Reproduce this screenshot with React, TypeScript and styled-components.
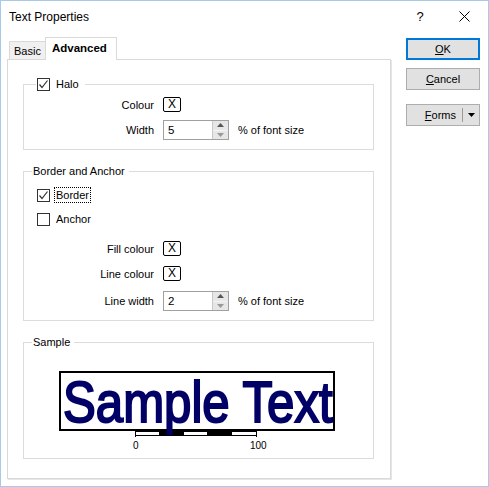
import React from 'react';
import styled, { createGlobalStyle } from 'styled-components';

const GlobalStyle = createGlobalStyle`
  html, body {
    margin: 0;
    padding: 0;
    background: #ffffff;
  }
  * {
    box-sizing: border-box;
  }
`;

type BoxProps = {
  $checked?: boolean;
};

type GroupProps = {
  $padTop?: number;
  $padBottom?: number;
};

type LegendProps = {
  $left?: number;
  $right?: number;
};

const Check: React.FC<BoxProps> = ({ $checked }) => (
  <CheckBox>
    {$checked && (
      <svg width="11" height="11" viewBox="0 0 11 11">
        <polyline points="1.5,5.5 4,8.5 9.5,1.5" fill="none" stroke="#333" strokeWidth="1.2" />
      </svg>
    )}
  </CheckBox>
);

const SpinBox: React.FC<{ value: string }> = ({ value }) => (
  <Spin>
    <SpinEdit>{value}</SpinEdit>
    <SpinButtons>
      <SpinButton>
        <svg width="7" height="4" viewBox="0 0 7 4">
          <polygon points="0,4 7,4 3.5,0" fill="#555" />
        </svg>
      </SpinButton>
      <SpinButton>
        <svg width="7" height="4" viewBox="0 0 7 4">
          <polygon points="0,0 7,0 3.5,4" fill="#999" />
        </svg>
      </SpinButton>
    </SpinButtons>
  </Spin>
);

// scale bar drawn under the sample box
const ScaleBar: React.FC = () => (
  <svg width="160" height="22" viewBox="0 0 160 22">
    <line x1="18" y1="0.5" x2="140" y2="0.5" stroke="#000" strokeWidth="1" />
    <line x1="18" y1="4.5" x2="140" y2="4.5" stroke="#000" strokeWidth="1" />
    <rect x="42" y="0" width="25" height="4" fill="#000" />
    <rect x="90" y="0" width="25" height="4" fill="#000" />
    <line x1="18.5" y1="0" x2="18.5" y2="6" stroke="#000" strokeWidth="1" />
    <line x1="139.5" y1="0" x2="139.5" y2="6" stroke="#000" strokeWidth="1" />
    <text x="16" y="18" fontSize="10" fontFamily="Liberation Sans, Arial, sans-serif" fill="#000">0</text>
    <text x="133" y="18" fontSize="10" fontFamily="Liberation Sans, Arial, sans-serif" fill="#000">100</text>
  </svg>
);

const App: React.FC = () => (
  <>
    <GlobalStyle />
    <Window>
      <TitleBar>
        <TitleText>Text Properties</TitleText>
        <TitleButton>?</TitleButton>
        <TitleButton>
          <svg width="11" height="11" viewBox="0 0 11 11">
            <line x1="0.5" y1="0.5" x2="10.5" y2="10.5" stroke="#000" strokeWidth="1" />
            <line x1="10.5" y1="0.5" x2="0.5" y2="10.5" stroke="#000" strokeWidth="1" />
          </svg>
        </TitleButton>
      </TitleBar>
      <Body>
        <LeftColumn>
          <TabStrip>
            <Tab>Basic</Tab>
            <ActiveTab>Advanced</ActiveTab>
          </TabStrip>
          <Panel>
            <Group $padTop={6} $padBottom={9}>
              <Legend $left={12} $right={6}>
                <Check $checked />
                <LegendLabel>Halo</LegendLabel>
              </Legend>
              <FieldGrid>
                <FieldLabel>Colour</FieldLabel>
                <ColourBox>X</ColourBox>
                <span />
                <FieldLabel>Width</FieldLabel>
                <SpinBox value="5" />
                <Unit>% of font size</Unit>
              </FieldGrid>
            </Group>

            <Group $padTop={9} $padBottom={9}>
              <Legend $left={8} $right={4}>
                <LegendLabel>Border and Anchor</LegendLabel>
              </Legend>
              <CheckList>
                <CheckRow>
                  <Check $checked />
                  <Focused>Border</Focused>
                </CheckRow>
                <CheckRow>
                  <Check />
                  <CheckText>Anchor</CheckText>
                </CheckRow>
              </CheckList>
              <FieldGrid $gap={10}>
                <FieldLabel>Fill colour</FieldLabel>
                <ColourBox>X</ColourBox>
                <span />
                <FieldLabel>Line colour</FieldLabel>
                <ColourBox>X</ColourBox>
                <span />
                <FieldLabel>Line width</FieldLabel>
                <SpinBox value="2" />
                <Unit>% of font size</Unit>
              </FieldGrid>
            </Group>

            <Group $padTop={22} $padBottom={5}>
              <Legend $left={8} $right={4}>
                <LegendLabel>Sample</LegendLabel>
              </Legend>
              <SampleArea>
                <SampleBox>
                  <SampleText>Sample Text</SampleText>
                </SampleBox>
                <ScaleBar />
              </SampleArea>
            </Group>
          </Panel>
        </LeftColumn>

        <RightColumn>
          <DefaultButton>
            <u>O</u>K
          </DefaultButton>
          <Button>
            <u>C</u>ancel
          </Button>
          <SplitButton>
            <SplitMain>
              <u>F</u>orms
            </SplitMain>
            <SplitArrow>
              <svg width="7" height="4" viewBox="0 0 7 4">
                <polygon points="0,0 7,0 3.5,4" fill="#000" />
              </svg>
            </SplitArrow>
          </SplitButton>
        </RightColumn>
      </Body>
    </Window>
  </>
);

export default App;

const Window = styled.div`
  width: 489px;
  height: 487px;
  border: 1px solid #a9c9ea;
  background: #ffffff;
  display: flex;
  flex-direction: column;
  font-family: 'Liberation Sans', Arial, sans-serif;
  font-size: 11px;
  color: #000;
  overflow: hidden;
`;

const TitleBar = styled.div`
  height: 31px;
  display: flex;
  align-items: center;
  padding: 0 9px 0 8px;
`;

const TitleText = styled.div`
  flex: 1;
  font-size: 12px;
  color: #000;
`;

const TitleButton = styled.div`
  width: 30px;
  height: 31px;
  display: flex;
  align-items: center;
  justify-content: center;
  font-size: 13px;
  margin-left: 14px;
`;

const Body = styled.div`
  display: flex;
  padding: 5px 0 0 6px;
`;

const LeftColumn = styled.div`
  width: 384px;
  display: flex;
  flex-direction: column;
`;

const TabStrip = styled.div`
  height: 22px;
  display: flex;
  align-items: flex-end;
  padding-left: 2px;
`;

const Tab = styled.div`
  height: 18px;
  padding: 2px 4px 0 4px;
  border: 1px solid #d9d9d9;
  border-bottom: none;
  background: #f0f0f0;
  line-height: 15px;
`;

const ActiveTab = styled.div`
  position: relative;
  z-index: 1;
  height: 23px;
  margin-bottom: -1px;
  margin-left: -1px;
  padding: 3px 9px 0 6px;
  border: 1px solid #d9d9d9;
  border-bottom: none;
  background: #ffffff;
  font-weight: bold;
  font-size: 11.5px;
  line-height: 14px;
`;

const Panel = styled.div`
  width: 384px;
  height: 420px;
  border: 1px solid #d9d9d9;
  box-shadow: 1px 1px 0 #e6e6e6;
  background: #ffffff;
  padding: 17px 16px 0 15px;
  display: flex;
  flex-direction: column;
  gap: 14px;
`;

const Group = styled.fieldset<GroupProps>`
  margin: 0;
  min-width: 0;
  border: 1px solid #dcdcdc;
  padding: ${(props) => props.$padTop ?? 6}px 0 ${(props) => props.$padBottom ?? 9}px 0;
`;

const Legend = styled.legend<LegendProps>`
  display: flex;
  align-items: center;
  gap: 6px;
  height: 14px;
  margin-left: ${(props) => props.$left ?? 8}px;
  padding: 0 ${(props) => props.$right ?? 4}px 0 1px;
`;

const LegendLabel = styled.span`
  line-height: 14px;
`;

const CheckBox = styled.span`
  width: 13px;
  height: 13px;
  border: 1px solid #333;
  background: #fff;
  display: inline-flex;
  align-items: center;
  justify-content: center;
  flex-shrink: 0;
`;

const FieldGrid = styled.div<{ $gap?: number }>`
  display: grid;
  grid-template-columns: 130px auto 1fr;
  column-gap: 9px;
  row-gap: ${(props) => props.$gap ?? 8}px;
  align-items: center;
`;

const FieldLabel = styled.span`
  text-align: right;
`;

const ColourBox = styled.span`
  width: 18px;
  height: 15px;
  border: 1px solid #000;
  border-radius: 2px;
  display: flex;
  align-items: center;
  justify-content: center;
  font-size: 12px;
  line-height: 13px;
`;

const Unit = styled.span`
  white-space: nowrap;
`;

const Spin = styled.div`
  width: 66px;
  height: 20px;
  display: flex;
  border: 1px solid #a0a0a0;
  background: #fff;
`;

const SpinEdit = styled.div`
  flex: 1;
  padding-left: 4px;
  line-height: 18px;
  font-size: 11.5px;
`;

const SpinButtons = styled.div`
  width: 16px;
  display: flex;
  flex-direction: column;
  border-left: 1px solid #c8c8c8;
`;

const SpinButton = styled.div`
  flex: 1;
  background: #e6e6e6;
  display: flex;
  align-items: center;
  justify-content: center;
  &:first-child {
    border-bottom: 1px solid #f4f4f4;
  }
`;

const CheckList = styled.div`
  display: flex;
  flex-direction: column;
  gap: 8px;
  padding-left: 13px;
  margin-bottom: 14px;
`;

const CheckRow = styled.div`
  height: 16px;
  display: flex;
  align-items: center;
  gap: 5px;
`;

const CheckText = styled.span`
  padding-left: 1px;
`;

const Focused = styled.span`
  outline: 1px dotted #000;
  padding: 0 1px;
  line-height: 14px;
`;

const SampleArea = styled.div`
  display: flex;
  flex-direction: column;
  align-items: center;
  padding-right: 4px;
`;

const SampleBox = styled.div`
  width: 276px;
  height: 60px;
  border: 2px solid #000;
  display: flex;
  align-items: center;
  padding-left: 2px;
`;

const SampleText = styled.span`
  font-family: 'Liberation Sans', Arial, sans-serif;
  font-size: 47.5px;
  line-height: 48px;
  color: #000066;
  -webkit-text-stroke: 1.7px #000066;
  white-space: nowrap;
  transform: scale(1.035, 1.22) translateY(1px);
  transform-origin: left center;
`;

const RightColumn = styled.div`
  margin-left: 15px;
  margin-top: 1px;
  width: 74px;
  display: flex;
  flex-direction: column;
`;

const Button = styled.div`
  height: 22px;
  border: 1px solid #adadad;
  background: #e1e1e1;
  display: flex;
  align-items: center;
  justify-content: center;
  margin-top: 8px;
`;

const DefaultButton = styled(Button)`
  border: 2px solid #0078d7;
  margin-top: 0;
`;

const SplitButton = styled(Button)`
  margin-top: 14px;
  justify-content: stretch;
`;

const SplitMain = styled.div`
  flex: 1;
  text-align: right;
  padding-right: 6px;
  border-right: 1px solid #9a9a9a;
  line-height: 14px;
`;

const SplitArrow = styled.div`
  width: 16px;
  display: flex;
  align-items: center;
  justify-content: center;
`;
